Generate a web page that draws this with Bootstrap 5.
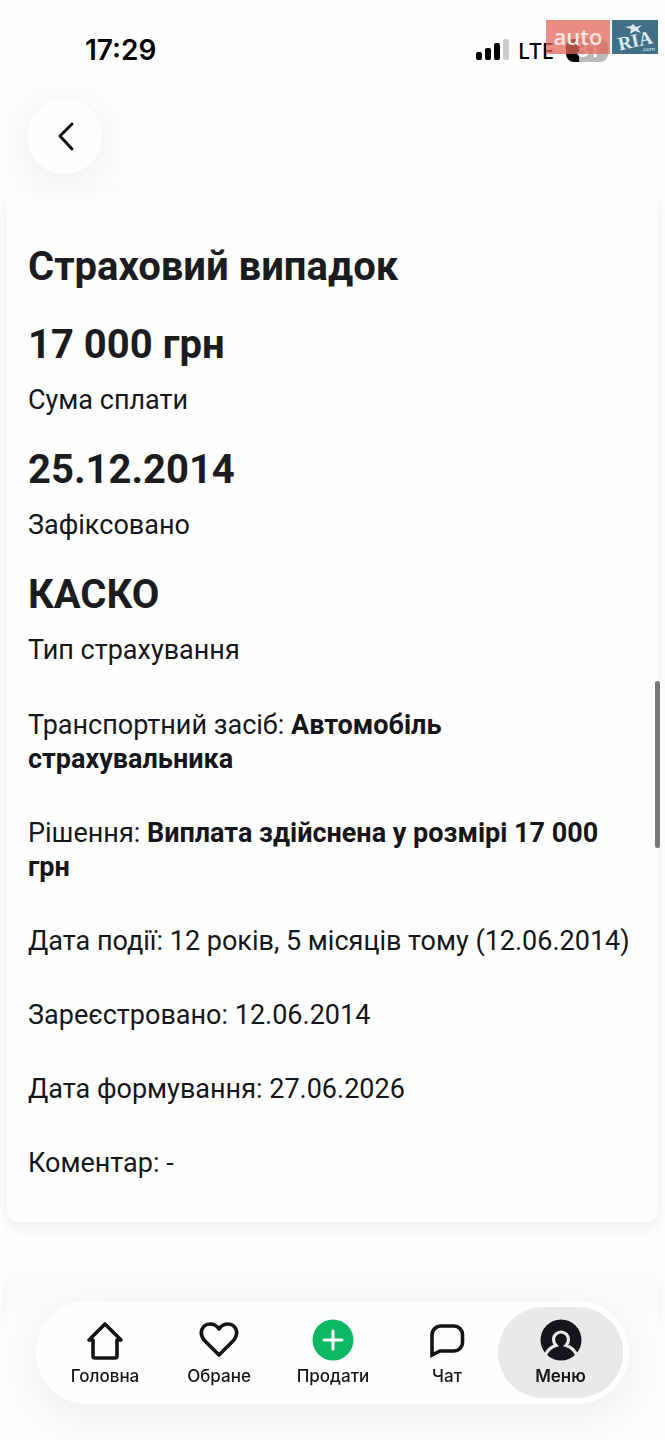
<!DOCTYPE html>
<html lang="uk">
<head>
<meta charset="utf-8">
<meta name="viewport" content="width=device-width, initial-scale=1">
<title>Страховий випадок</title>
<link href="https://cdn.jsdelivr.net/npm/bootstrap@5.3.0/dist/css/bootstrap.min.css" rel="stylesheet">
<style>
  body { font-family: Roboto, "Noto Sans", sans-serif; font-size: 27px; line-height: 34px; color: #151619; background: #fefefe; }
  .status-bar { height: 99px; padding: 33px 57px 0 85px; font-family: Inter, Roboto, sans-serif; color: #000; }
  .clock { font-size: 28px; font-weight: 600; }
  .network { font-family: "Noto Sans", sans-serif; font-size: 22px; font-weight: 500; }
  .battery { width: 42px; height: 23px; border-radius: 8px; font-size: 20px; line-height: 23px; font-weight: 700; color: #fff; background: linear-gradient(90deg, #000 13px, #b9b9b9 13px); }
  .brand { top: 20px; right: 7px; gap: 2px; height: 34px; }
  .brand-auto { width: 64px; font-size: 22px; line-height: 32px; color: #fbe5e2; background: rgba(226, 105, 92, .76); font-family: "Open Sans", sans-serif; font-weight: 600; }
  .back { width: 75px; height: 75px; margin-left: 27px; background: #fefefe; box-shadow: 0 8px 44px rgba(0, 0, 0, .08); z-index: 1; }
  .panel { margin: 0 7px; border: 0; border-radius: 12px; background: #fefefe; color: inherit; box-shadow: 0 4px 14px rgba(0, 0, 0, .08); }
  .case { margin-top: 16px; padding: 53px 21px 42px; box-shadow: 0 6px 14px rgba(0, 0, 0, .07); }
  .case h1, .fact dt { font-size: 40px; line-height: 48px; font-weight: 700; color: #1b1c20; }
  .case h1 { margin-bottom: 30px; }
  .fact { margin-bottom: 29px; }
  .fact dt { margin-bottom: 14px; }
  .details { margin-top: 12px; }
  .details p { margin-bottom: 40px; }
  .details p:last-child { margin-bottom: 0; }
  .scroll-thumb { right: 5px; top: 681px; width: 5px; height: 167px; border-radius: 3px; background: #777; z-index: 2; }
  .upcoming { margin-top: 54px; min-height: 164px; background: #fcfcfc; }
  .dock { padding: 0 36px 36px; background: linear-gradient(rgba(254, 254, 254, 0), #fdfdfd 30px); }
  .tabs { padding: 6px 6px 6px 12px; border-radius: 52px; background: #fefefe; box-shadow: 0 10px 40px rgba(0, 0, 0, .07); }
  .tabs a { flex: 1 1 0; height: 91px; padding-top: 12px; border-radius: 46px; font-family: Inter, Roboto, sans-serif; font-size: 17px; line-height: 20px; font-weight: 500; color: #151619; gap: 5px; }
  .tabs a.current { flex: 0 0 125px; margin-left: -6px; background: #e9e9e9; font-weight: 600; }
</style>
</head>
<body>
<div class="d-flex flex-column min-vh-100 position-relative">
  <header>
    <div class="status-bar d-flex justify-content-between align-items-start">
      <span class="clock">17:29</span>
      <div class="d-flex align-items-center">
        <svg class="me-2" width="34" height="24" viewBox="0 0 34 24" role="img" aria-label="Сигнал"><g fill="#000"><rect x="0" y="14" width="6" height="8" rx="2"/><rect x="9" y="10" width="6" height="12" rx="2"/><rect x="18" y="5" width="6" height="17" rx="2"/></g><rect x="27" y="1" width="6" height="21" rx="2" fill="#ccc"/></svg>
        <span class="network me-2">LTE</span>
        <span class="battery text-center ms-1">31</span>
      </div>
    </div>
    <div class="brand position-absolute d-flex" aria-label="auto RIA">
      <span class="brand-auto text-center">auto</span>
      <svg width="46" height="34" viewBox="0 0 46 34"><rect width="46" height="34" fill="#3f7087"/><path d="M21 4l3 3 6-2-4 4 3 4-6-2-5 3 1-5-6-2 6-1z" fill="#dce8ec"/><text transform="rotate(-12 23 20)" x="23" y="27" text-anchor="middle" font-family="Liberation Serif, serif" font-weight="700" font-size="19" fill="#dce8ec">RIA</text><text x="43" y="31" text-anchor="end" font-family="Roboto, sans-serif" font-size="6" fill="#dce8ec">.com</text></svg>
    </div>
    <button type="button" class="back btn rounded-circle p-0 border-0 d-flex align-items-center justify-content-center position-relative" aria-label="Назад">
      <svg width="20" height="32" viewBox="0 0 20 32" fill="none" stroke="#111" stroke-width="3" stroke-linecap="round" stroke-linejoin="round"><path d="M17 3L5 15l12 13"/></svg>
    </button>
  </header>

  <main class="d-flex flex-column flex-grow-1">
    <article class="panel card case">
      <h1>Страховий випадок</h1>
      <dl class="m-0">
        <div class="fact"><dt>17 000 грн</dt><dd class="m-0">Сума сплати</dd></div>
        <div class="fact"><dt>25.12.2014</dt><dd class="m-0">Зафіксовано</dd></div>
        <div class="fact"><dt>КАСКО</dt><dd class="m-0">Тип страхування</dd></div>
      </dl>
      <div class="details">
        <p>Транспортний засіб: <strong>Автомобіль страхувальника</strong></p>
        <p>Рішення: <strong>Виплата здійснена у розмірі 17 000 грн</strong></p>
        <p>Дата події: 12 років, 5 місяців тому (12.06.2014)</p>
        <p>Зареєстровано: 12.06.2014</p>
        <p>Дата формування: 27.06.2026</p>
        <p>Коментар: -</p>
      </div>
    </article>
    <section class="panel card upcoming flex-grow-1"></section>
  </main>
  <div class="scroll-thumb position-absolute"></div>
</div>

<div class="dock fixed-bottom">
  <nav class="tabs d-flex">
    <a href="#" class="d-flex flex-column align-items-center text-decoration-none">
      <svg width="42" height="42" viewBox="0 0 42 42" fill="none" stroke="#111316" stroke-width="3.6" stroke-linejoin="round" stroke-linecap="round"><path d="M9 21H5L21 5l16 16h-4v16a2 2 0 0 1-2 2H11a2 2 0 0 1-2-2z"/></svg>
      <span>Головна</span></a>
    <a href="#" class="d-flex flex-column align-items-center text-decoration-none">
      <svg width="42" height="42" viewBox="0 0 42 42" fill="none" stroke="#111316" stroke-width="3.6" stroke-linejoin="round"><path d="M21 36L6.500 21.500C0 14 4.500 5 12 5c4 0 7 2 9 5 2-3 5-5 9-5 7.500 0 12 9 5.500 16.500z"/></svg>
      <span>Обране</span></a>
    <a href="#" class="d-flex flex-column align-items-center text-decoration-none">
      <svg width="42" height="42" viewBox="0 0 42 42"><circle cx="21" cy="21" r="20.5" fill="#0cb863"/><path d="M21 12v18M12 21h18" stroke="#fff" stroke-width="3" stroke-linecap="round"/></svg>
      <span>Продати</span></a>
    <a href="#" class="d-flex flex-column align-items-center text-decoration-none">
      <svg width="42" height="42" viewBox="0 0 42 42" fill="none" stroke="#111316" stroke-width="3.6" stroke-miterlimit="8"><path d="M6 36V16a9 9 0 0 1 9-9h13a8.500 8.500 0 0 1 8.500 8.500v8a8.500 8.500 0 0 1-8.500 8.500H14z"/></svg>
      <span>Чат</span></a>
    <a href="#" class="current d-flex flex-column align-items-center text-decoration-none" aria-current="page">
      <svg width="42" height="42" viewBox="0 0 42 42"><circle cx="21" cy="21" r="20.5" fill="#14161a"/><path d="M5.500 36c2-5 5.500-8 10.500-9.500-2-2-2.500-4-2.500-6a7.500 7.500 0 0 1 15 0c0 2-.5 4-2.500 6 5 1.500 8.500 4.500 10.500 9.500" fill="none" stroke="#e9e9e9" stroke-width="3.2"/></svg>
      <span>Меню</span></a>
  </nav>
</div>
<script src="https://cdn.jsdelivr.net/npm/bootstrap@5.3.0/dist/js/bootstrap.bundle.min.js"></script>
</body>
</html>
